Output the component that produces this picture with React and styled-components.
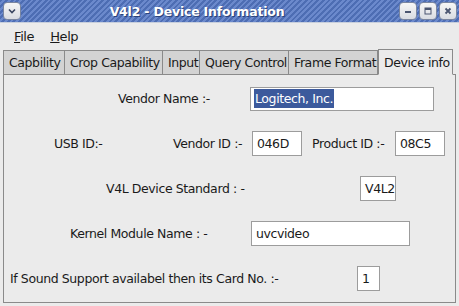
import React from "react";
import styled, { createGlobalStyle } from "styled-components";

const Global = createGlobalStyle`
  body {
    margin: 0;
    background: #ebebeb;
    font-family: "DejaVu Sans", "Liberation Sans", sans-serif;
    font-size: 12.5px;
    letter-spacing: -0.4px;
    color: #1a1a1a;
  }
`;

const Window = styled.div`
  width: 459px;
  height: 306px;
  display: flex;
  flex-direction: column;
  background: #ebebeb;
  overflow: hidden;
`;

const TitleBar = styled.div`
  height: 22px;
  display: flex;
  align-items: center;
  padding: 0 2px 0 3px;
  background: repeating-linear-gradient(
    135deg,
    #4d6db3 0px,
    #4d6db3 2px,
    #6b89cc 2px,
    #6b89cc 4px
  );
  border-bottom: 1px solid #c8cfdc;
`;

const Title = styled.div`
  flex: 1;
  text-align: center;
  color: #fff;
  font-weight: bold;
  font-size: 12.5px;
  letter-spacing: -0.2px;
  padding-right: 26px;
  text-shadow: 1px 1px 0 #2b437a;
`;

const WinButton = styled.div`
  width: 18px;
  height: 18px;
  box-sizing: border-box;
  margin-left: ${(p) => (p.$first ? "0" : "2px")};
  border: 1px solid #7a86a0;
  border-radius: 4px;
  background: linear-gradient(#f6f6f6, #d9dce2);
  display: flex;
  align-items: center;
  justify-content: center;
`;

const MenuBar = styled.div`
  height: 24px;
  display: flex;
  align-items: center;
  padding-left: 14px;
  gap: 16px;
  margin-top: 1px;
  font-size: 13px;
`;

const MenuItem = styled.span`
  u {
    text-decoration: underline;
  }
`;

const TabStrip = styled.div`
  display: flex;
  align-items: flex-end;
  padding-left: 3px;
  margin-top: 0;
  height: 26px;
  position: relative;
  z-index: 1;
`;

const Tab = styled.div`
  height: ${(p) => (p.$active ? "26px" : "24px")};
  box-sizing: border-box;
  padding: 0 5px;
  width: ${(p) => p.$w}px;
  display: flex;
  align-items: center;
  border: 1px solid #8a8a8a;
  border-bottom: ${(p) => (p.$active ? "1px solid #ebebeb" : "none")};
  border-left: ${(p) => (p.$first || p.$active ? "1px solid #8a8a8a" : "none")};
  background: ${(p) => (p.$active ? "#ebebeb" : "#d3d3d3")};
  margin-bottom: ${(p) => (p.$active ? "-1px" : "0")};
  white-space: nowrap;
`;

const Panel = styled.div`
  margin: 0 3px 3px 3px;
  border: 1px solid #8a8a8a;
  flex: 1;
  display: flex;
  flex-direction: column;
  padding-top: 1px;
`;

const Row = styled.div`
  height: 45px;
  display: flex;
  align-items: center;
`;

const Label = styled.div`
  margin-left: ${(p) => p.$ml || 0}px;
  width: ${(p) => p.$w}px;
  flex: none;
  white-space: nowrap;
`;

const Field = styled.div`
  width: ${(p) => p.$w}px;
  height: ${(p) => p.$h || 25}px;
  box-sizing: border-box;
  border: 1px solid #9c9c9c;
  background: #fff;
  padding-left: 4px;
  display: flex;
  align-items: center;
  flex: none;
  white-space: nowrap;
`;

const Selected = styled.span`
  background: #3c5a9c;
  color: #fff;
  padding: 2px 1px;
  margin-left: -1px;
`;

const Chevron = () => (
  <svg width="12" height="12" viewBox="0 0 12 12">
    <path d="M3 4.5 L6 7.5 L9 4.5" stroke="#3a4660" strokeWidth="1.6" fill="none" />
  </svg>
);

const MinIcon = () => (
  <svg width="10" height="10" viewBox="0 0 10 10">
    <rect x="2" y="5" width="6" height="2" fill="#4a5570" />
  </svg>
);

const MaxIcon = () => (
  <svg width="10" height="10" viewBox="0 0 10 10">
    <rect x="2" y="2" width="6" height="6" stroke="#4a5570" strokeWidth="1" fill="none" />
    <rect x="2" y="2" width="6" height="2" fill="#4a5570" />
  </svg>
);

const CloseIcon = () => (
  <svg width="10" height="10" viewBox="0 0 10 10">
    <path d="M2.5 2.5 L7.5 7.5 M7.5 2.5 L2.5 7.5" stroke="#4a5570" strokeWidth="1.8" />
  </svg>
);

const tabs = [
  { label: "Capbility", w: 62 },
  { label: "Crop Capability", w: 98 },
  { label: "Input", w: 37 },
  { label: "Query Control", w: 89 },
  { label: "Frame Format", w: 89 },
  { label: "Device info", w: 75, active: true },
];

export default function App() {
  return (
    <Window>
      <Global />
      <TitleBar>
        <WinButton $first>
          <Chevron />
        </WinButton>
        <Title>V4l2 - Device Information</Title>
        <WinButton $first>
          <MinIcon />
        </WinButton>
        <WinButton>
          <MaxIcon />
        </WinButton>
        <WinButton>
          <CloseIcon />
        </WinButton>
      </TitleBar>
      <MenuBar>
        <MenuItem>
          <u>F</u>ile
        </MenuItem>
        <MenuItem>
          <u>H</u>elp
        </MenuItem>
      </MenuBar>
      <TabStrip>
        {tabs.map((t, i) => (
          <Tab key={t.label} $w={t.w} $first={i === 0} $active={t.active}>
            {t.label}
          </Tab>
        ))}
      </TabStrip>
      <Panel>
        <Row>
          <Label $ml={114} $w={132}>Vendor Name :-</Label>
          <Field $w={184} $h={24}>
            <Selected>Logitech, Inc.</Selected>
          </Field>
        </Row>
        <Row>
          <Label $ml={50} $w={119}>USB ID:-</Label>
          <Label $w={79}>Vendor ID :-</Label>
          <Field $w={50}>046D</Field>
          <Label $ml={10} $w={83}>Product ID :-</Label>
          <Field $w={50}>08C5</Field>
        </Row>
        <Row>
          <Label $ml={102} $w={254}>V4L Device Standard : -</Label>
          <Field $w={36}>V4L2</Field>
        </Row>
        <Row>
          <Label $ml={66} $w={181}>Kernel Module Name : -</Label>
          <Field $w={159}>uvcvideo</Field>
        </Row>
        <Row>
          <Label $ml={6} $w={347}>If Sound Support availabel then its Card No. :-</Label>
          <Field $w={23}>1</Field>
        </Row>
      </Panel>
    </Window>
  );
}
